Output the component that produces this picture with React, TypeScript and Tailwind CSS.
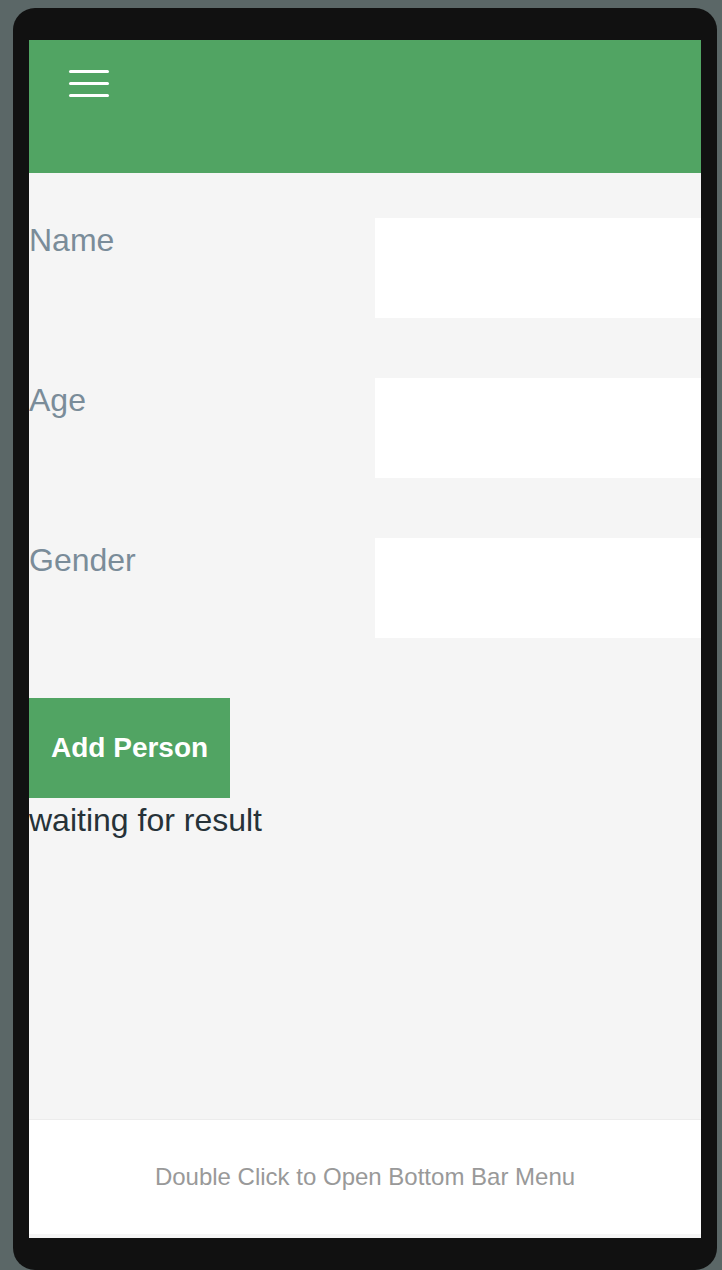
function Row({ label }: { label: string }) {
    return (
        <div className="flex items-start mb-[60px]">
            <label className="flex-1 text-[32px] leading-[44px] text-[#7a8c99]">{label}</label>
            <input className="w-[326px] h-[100px] bg-white outline-none" />
        </div>
    );
}

export default function App() {
    return (
        <div className="min-h-screen bg-[#5b6767] pt-2 pl-[13px] font-['Liberation_Sans',Arial,sans-serif]">
            <div className="w-[704px] h-[1262px] bg-[#111111] rounded-[22px] px-4 py-8">
                <div className="flex flex-col h-full bg-[#f5f5f5]">
                    <header className="h-[133px] bg-[#51a463] pl-10 pt-[30px] shrink-0">
                        <div className="flex flex-col gap-[9px] w-10">
                            <span className="block h-[3px] rounded-full bg-white" />
                            <span className="block h-[3px] rounded-full bg-white" />
                            <span className="block h-[3px] rounded-full bg-white" />
                        </div>
                    </header>

                    <main className="flex-1 pt-[45px]">
                        <Row label="Name" />
                        <Row label="Age" />
                        <Row label="Gender" />
                        <button className="h-[100px] px-[22px] bg-[#51a463] text-white text-[28px] font-bold">
                            Add Person
                        </button>
                        <p className="text-[32px] leading-[44px] text-[#263238]">waiting for result</p>
                    </main>

                    <footer className="h-[115px] mb-1 shrink-0 bg-white border-t border-[#ececec] flex items-center justify-center text-[24px] text-[#999999]">
                        Double Click to Open Bottom Bar Menu
                    </footer>
                </div>
            </div>
        </div>
    );
}
